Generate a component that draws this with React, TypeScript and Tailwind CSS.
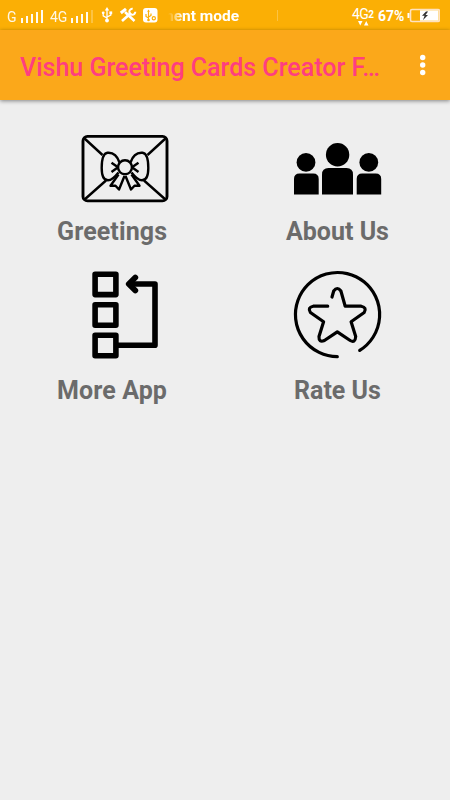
import React from "react";

function Signal({ faded }: { faded?: boolean }) {
  return (
    <svg className="h-[14px] w-[24px] shrink-0" viewBox="0 0 24 14" fill="#fff" fillOpacity=".95">
      <rect x="1" y="9" width="2" height="5" />
      <rect x="6" y="7" width="2" height="7" />
      <rect x="11" y="5" width="2" height="9" />
      <rect x="16" y="3" width="2" height="11" />
      <rect x="21" y="1" width="2" height="13" fillOpacity={faded ? 0.25 : 0.95} />
    </svg>
  );
}

function UsbIcon() {
  return (
    <svg className="mb-px ml-[7px] h-[16px] w-[12px] shrink-0" viewBox="0 0 12 16" fill="none" stroke="#fff" strokeWidth="1.3">
      <path d="M6 3v10M6 11 2.2 8.8V6M6 10l3.8-2V5.5" />
      <path d="M6 0 8.2 3.5H3.8z" fill="#fff" stroke="none" />
      <circle cx="6" cy="13.5" r="1.9" fill="#fff" stroke="none" />
      <circle cx="2.2" cy="5.8" r="1.4" fill="#fff" stroke="none" />
      <rect x="8.4" y="4.4" width="2.8" height="2.8" fill="#fff" stroke="none" />
    </svg>
  );
}

function ToolsIcon() {
  return (
    <svg className="mb-px ml-[6px] h-[16px] w-[18px] shrink-0" viewBox="0 0 18 16" fill="none" stroke="#fff">
      <path d="M3 14 12 6" strokeWidth="2.6" />
      <path d="M16.300 4.800a3 3 0 1 1-2.600-3" strokeWidth="2" />
      <path d="m6 5 9.500 9" strokeWidth="2.600" />
      <path d="M1.800 6 7 1.800" strokeWidth="3" />
    </svg>
  );
}

function DebugIcon() {
  return (
    <svg className="mb-px ml-[6px] h-[15px] w-[15px] shrink-0" viewBox="0 0 15 15" fill="none">
      <rect width="14.500" height="14.500" rx="3" fill="#fff" />
      <g stroke="#fbaf05" strokeWidth="1.200">
        <path d="M5.500 2.500v9M5.500 10 3 8.500V6M5.500 9 8 7.500V5.500" />
        <circle cx="10.800" cy="10.300" r="1.600" />
      </g>
      <circle cx="5.500" cy="12" r="1.300" fill="#fbaf05" />
      <path d="m5.500 1.500 1.300 2.300H4.200z" fill="#fbaf05" />
    </svg>
  );
}

function StatusBar() {
  return (
    <div className="flex h-[30px] items-start bg-[#fbaf05] pl-[7px] text-white">
      <div className="mt-[8px] flex h-[15px] w-full items-center">
        <span className="w-[13px] shrink-0 pt-[3px] text-[14px] leading-none opacity-90">G</span>
        <Signal />
        <span className="ml-[6px] w-[20px] shrink-0 pt-[3px] text-[14px] leading-none opacity-90">4G</span>
        <Signal faded />
        <UsbIcon />
        <ToolsIcon />
        <DebugIcon />
        <span className="ml-[7px] w-[75px] shrink-0 whitespace-nowrap pt-px text-[15.5px] font-bold leading-[18px] [mask-image:linear-gradient(to_right,transparent_3px,rgba(0,0,0,0.4)_9px,black_18px)]">
          nent mode
        </span>
        <span className="ml-[37px] h-[11px] w-px bg-white/25" />
        <span className="ml-auto flex h-[18px] w-[24px] shrink-0 flex-col">
          <span className="flex items-end text-[14px] leading-[14px] tracking-[-0.6px]">
            4G<b className="text-[10px] leading-[12px]">2</b>
          </span>
          <svg className="ml-[6px] h-[5px] w-[12px] shrink-0" viewBox="0 0 12 5" fill="#fff">
            <path d="M0 0h4.500L2.250 4.500zM6 4.500h4.500L8.250 0z" />
          </svg>
        </span>
        <span className="ml-[2px] w-[28px] shrink-0 text-[14px] font-bold leading-none">67%</span>
        <svg className="mb-px ml-[1px] mr-[10px] h-[15px] w-[33px] shrink-0" viewBox="0 0 33 15">
          <rect x="0.500" y="5" width="2" height="5" fill="#fff" />
          <rect x="3.500" y="1.500" width="29" height="12" rx="1.500" fill="#fbaf05" stroke="#ffe2c0" strokeWidth="1.600" />
          <rect x="13" y="2.300" width="18.500" height="10.400" fill="#fff" />
          <path d="m19 3.500-4 4.300h2.600L16 12l5-5h-2.500l2.600-3.500z" fill="#333" />
        </svg>
      </div>
    </div>
  );
}

function GreetingIcon() {
  const half = (
    <g>
      <path d="M84 138 102.500 155M84 200l22-19.500" />
      <path d="M119.500 162.500C117 155 112 152.400 107.500 152.800C102 153.500 101.700 162 101.700 168C101.700 175 103 180.300 108 180.300C112 180.300 115 177 118.500 172.500" />
      <path d="m111.500 162.700 6.500 4.600-6.500 4.600" />
      <path d="m118.500 174.500-8 11.200h5l3.500 3.800 5.500-13.500" />
    </g>
  );
  return (
    <svg className="h-[75px] w-[90px]" viewBox="80 130 90 75" fill="none" stroke="#000" strokeWidth="2.400" strokeLinejoin="round">
      <rect x="83" y="136.400" width="84" height="64.500" rx="4.500" strokeWidth="2.900" />
      {half}
      <g transform="translate(250 0) scale(-1 1)">{half}</g>
      <circle cx="125" cy="167.300" r="7" />
    </svg>
  );
}

function PeopleIcon() {
  return (
    <svg className="h-[75px] w-[90px]" viewBox="292 130 90 75">
      <circle cx="306" cy="162.400" r="9.400" />
      <circle cx="337.600" cy="154.700" r="11.700" />
      <circle cx="368.800" cy="162.400" r="9.400" />
      <path d="M294 194.500v-15.500q0-5.500 5.500-5.500h13.700q5.500 0 5.500 5.500v15.500z" />
      <path d="M322 194.500v-20q0-6.500 6.500-6.500h18q6.500 0 6.500 6.500v20z" />
      <path d="M356.700 194.500v-15.500q0-5.500 5.500-5.500h13.500q5.500 0 5.500 5.500v15.500z" />
    </svg>
  );
}

function MoreIcon() {
  return (
    <svg className="h-[94px] w-[90px]" viewBox="80 268 90 94" fill="none" stroke="#000" strokeWidth="5.600" strokeLinejoin="round" strokeLinecap="round">
      <rect x="95.100" y="274.200" width="20.800" height="20.400" />
      <rect x="95.100" y="304.800" width="20.800" height="20.400" />
      <rect x="95.100" y="335.300" width="20.800" height="20.400" />
      <path d="M118 345.300H155V284H131" />
      <path d="m135.300 277.500-6.500 6.500 6.500 6.500" strokeWidth="5.800" />
      <path d="m129 284 5-4v8z" fill="#000" strokeWidth="2" />
    </svg>
  );
}

function StarIcon() {
  return (
    <svg className="h-[94px] w-[90px]" viewBox="292.300 268 90 94" fill="none" stroke="#000" strokeWidth="3.200" strokeLinejoin="round" strokeLinecap="round">
      <path d="M337.600 356.700A42.100 42.100 0 1 1 360 350.400" />
      <path d="M332.300 297 334 291Q337.600 286 341.200 291L345.500 306.200H361.500Q367.500 307.500 364.500 312.500L351.400 321.800 356 336.500Q355.500 343.500 350.500 340.500L337.600 331.800 324.700 340.500Q319 343 319.300 336.500L323.900 321.800 310.700 312.500Q307.500 307.500 313.500 306.200H328" />
    </svg>
  );
}

function Tile({ icon, label, className }: { icon: React.ReactNode; label: string; className: string }) {
  return (
    <button className="flex flex-col items-start text-left">
      {icon}
      <span className={"whitespace-nowrap text-[25px] font-bold leading-[30px] text-[#6b6b6b] " + className}>{label}</span>
    </button>
  );
}

export default function App() {
  return (
    <div className="flex h-[800px] w-[450px] flex-col overflow-hidden bg-[#eeeeee] font-['Roboto',sans-serif]">
      <StatusBar />
      <header className="flex h-[70px] shrink-0 items-center bg-[#fba81a] pl-[20px] pr-[24px] pt-[4px] shadow-[0_1px_4px_rgba(0,0,0,0.45)]">
        <h1 className="whitespace-nowrap pt-px text-[25px] font-medium leading-[30px] text-[#ff3e80]">Vishu Greeting Cards Creator F…</h1>
        <svg className="mb-[4px] ml-auto h-[22px] w-[6px]" viewBox="0 0 6 22" fill="#fff">
          <circle cx="2.700" cy="3.500" r="2.700" />
          <circle cx="2.700" cy="11" r="2.700" />
          <circle cx="2.700" cy="18.500" r="2.700" />
        </svg>
      </header>
      <main className="grid grid-cols-[212px_1fr] gap-y-[21px] pl-[80px] pt-[30px]">
        <Tile icon={<GreetingIcon />} label="Greetings" className="mt-[12px] -ml-[23px] tracking-[0.1px]" />
        <Tile icon={<PeopleIcon />} label="About Us" className="mt-[12px] -ml-[6px]" />
        <Tile icon={<MoreIcon />} label="More App" className="mt-[14px] -ml-[23px] tracking-[0.1px]" />
        <Tile icon={<StarIcon />} label="Rate Us" className="mt-[14px] ml-[2px]" />
      </main>
    </div>
  );
}
